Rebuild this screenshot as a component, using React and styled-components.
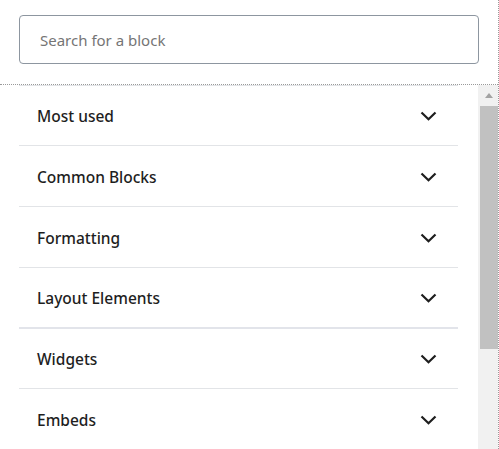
import React from 'react';
import styled, { createGlobalStyle } from 'styled-components';

const GlobalStyle = createGlobalStyle`
  html, body {
    margin: 0;
    padding: 0;
    background: #fff;
  }
  body {
    font-family: "Noto Sans", "Open Sans", sans-serif;
    color: #1e1e1e;
  }
`;

const Inserter = styled.div`
  width: 498px;
  height: 449px;
  border-right: 1px dotted #9a9a9a;
  display: flex;
  flex-direction: column;
  overflow: hidden;
`;

const SearchArea = styled.div`
  padding: 15px 19px 20px 19px;
  border-bottom: 1px dotted #9a9a9a;
`;

const SearchInput = styled.input`
  box-sizing: border-box;
  width: 460px;
  height: 49px;
  padding: 0 20px;
  border: 1px solid #8d96a0;
  border-radius: 4px;
  font-family: "Noto Sans", "Open Sans", sans-serif;
  font-size: 15px;
  color: #1e1e1e;
  outline: none;

  &::placeholder {
    color: #757575;
  }
`;

const Body = styled.div`
  flex: 1;
  display: flex;
  min-height: 0;
`;

const PanelList = styled.div`
  flex: 1;
  padding: 0 20px 0 19px;
  overflow: hidden;
`;

const Panel = styled.div`
  box-sizing: border-box;
  height: ${(p) => (p.short ? '60px' : '61px')};
  display: flex;
  align-items: center;
  justify-content: space-between;
  padding: 1px 21px 0 18px;
  border-top: ${(p) => (p.first ? '1px solid #e2e4e7' : 'none')};
  border-bottom: ${(p) => (p.thick ? '2px solid #e2e4ea' : '1px solid #e2e4e7')};
`;

const PanelTitle = styled.span`
  font-size: 15.5px;
  font-weight: 500;
  color: #1e1e1e;
`;

const Scrollbar = styled.div`
  width: 20px;
  background: #f1f1f1;
  display: flex;
  flex-direction: column;
`;

const ScrollButton = styled.div`
  height: 21px;
  display: flex;
  align-items: center;
  justify-content: center;
  padding-left: 1px;

  &::before {
    content: '';
    width: 0;
    height: 0;
    border-left: 4px solid transparent;
    border-right: 4px solid transparent;
    border-bottom: 5px solid #a3a3a3;
  }
`;

const ScrollThumb = styled.div`
  height: 243px;
  margin: 0 0 0 2px;
  background: #c1c1c1;
`;

const Chevron = () => (
  <svg width="17" height="10" viewBox="0 0 17 10" aria-hidden="true">
    <polyline
      points="1.5,1.5 8.5,8.3 15.5,1.5"
      fill="none"
      stroke="#1e1e1e"
      strokeWidth="2.2"
    />
  </svg>
);

const panels = [
  'Most used',
  'Common Blocks',
  'Formatting',
  'Layout Elements',
  'Widgets',
  'Embeds',
];

export default function App() {
  return (
    <>
      <GlobalStyle />
      <Inserter>
        <SearchArea>
          <SearchInput placeholder="Search for a block" />
        </SearchArea>
        <Body>
          <PanelList>
            {panels.map((title, i) => (
              <Panel
                key={title}
                first={i === 0}
                thick={title === 'Layout Elements'}
                short={title === 'Widgets'}
              >
                <PanelTitle>{title}</PanelTitle>
                <Chevron />
              </Panel>
            ))}
          </PanelList>
          <Scrollbar>
            <ScrollButton />
            <ScrollThumb />
          </Scrollbar>
        </Body>
      </Inserter>
    </>
  );
}
